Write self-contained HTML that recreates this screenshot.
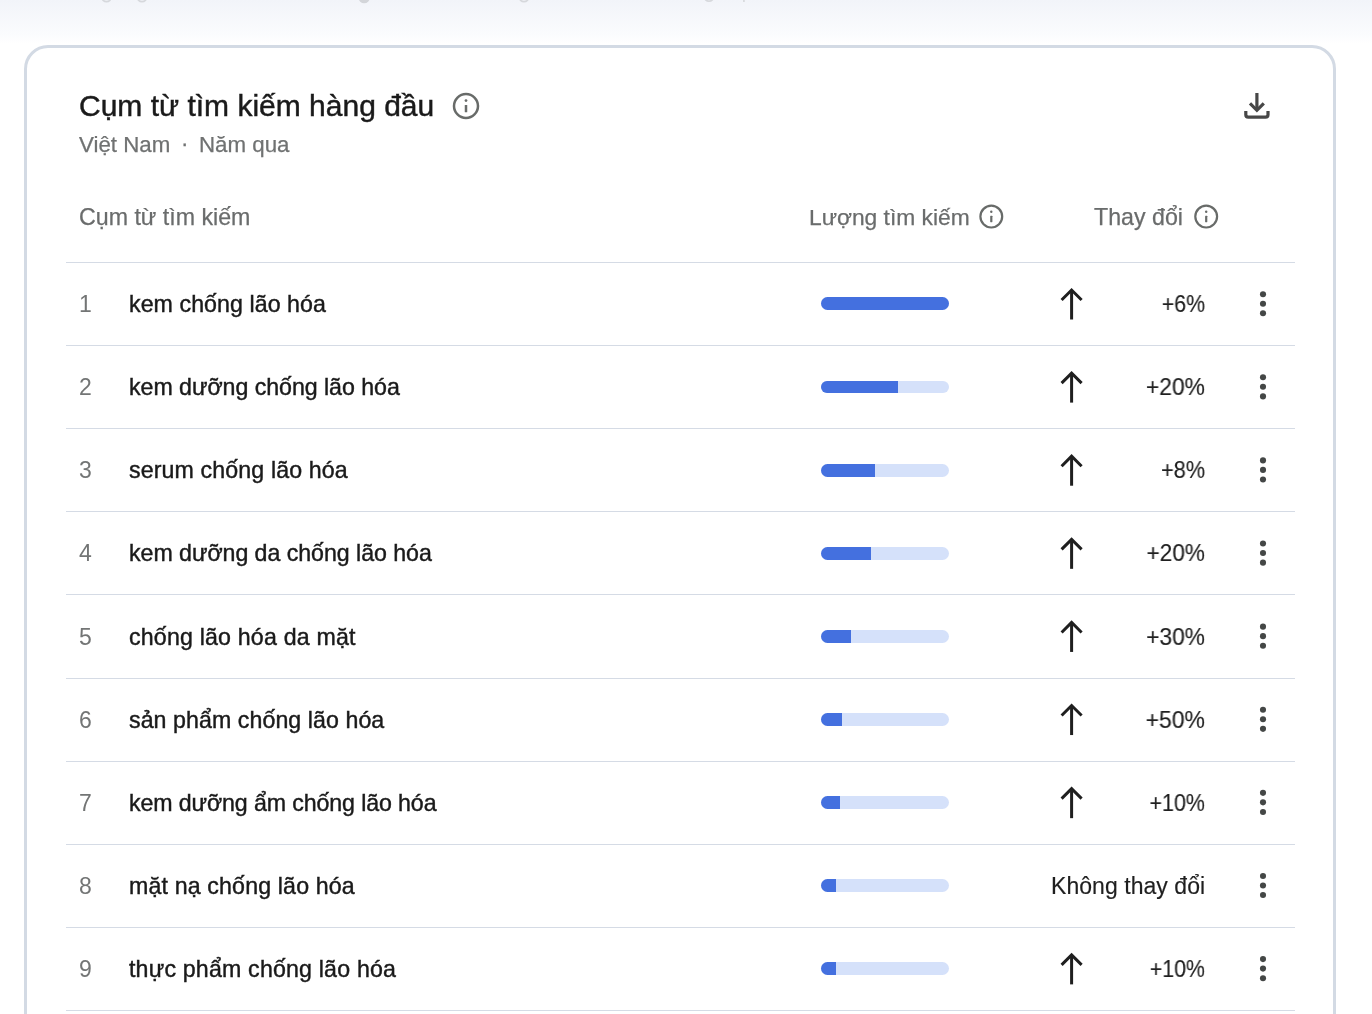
<!DOCTYPE html><html><head><meta charset="utf-8"><style>
*{margin:0;padding:0;box-sizing:border-box}
html,body{width:1372px;height:1014px;overflow:hidden;background:#fff;font-family:"Liberation Sans",sans-serif}
.bg{position:absolute;left:0;top:0;width:1372px;height:46px;background:linear-gradient(#f2f4f9 0,#fbfcfe 36px,#fff 44px)}
.card{position:absolute;left:24px;top:45px;width:1312px;height:1100px;border:3px solid #d3dae4;border-radius:24px;background:#fff}
.t{position:absolute;white-space:nowrap;line-height:1;will-change:transform}
.title{left:79px;font-size:30px;color:#1a1a1a;-webkit-text-stroke:0.45px #1a1a1a}
.sub{font-size:22.3px;color:#707272;-webkit-text-stroke:0.25px #707272}
.hd{font-size:23.2px;color:#6a6c6c;-webkit-text-stroke:0.25px #6a6c6c}
.line{position:absolute;left:66px;width:1229px;height:1px;background:#d5dbe5}
.num{left:79px;font-size:23px;color:#737575}
.q{left:129px;font-size:23.2px;color:#1a1a1a;-webkit-text-stroke:0.42px #1a1a1a}
.pct{right:167px;font-size:23.2px;color:#1f1f1f;text-align:right;-webkit-text-stroke:0.15px #1f1f1f}
.track{position:absolute;left:821px;width:128px;border-radius:7px;background:#d5e1fa;overflow:hidden}
.fill{position:absolute;left:0;top:0;height:100%;background:#4470df}
svg{position:absolute;overflow:visible}
</style></head><body>
<div class="bg"></div>
<div class="card"></div>
<svg style="left:0;top:0" width="1" height="1"><g fill="none" stroke="#d6d8dc" stroke-width="1.8"><circle cx="106.5" cy="-3" r="4.6"/><circle cx="142" cy="-3" r="4.6"/><circle cx="524" cy="-3" r="4.6"/><circle cx="709" cy="-3.5" r="4.6"/></g><ellipse cx="364.2" cy="-3" rx="5.8" ry="6.3" fill="#d3d5d9"/><rect x="743" y="-3" width="1.8" height="5" fill="#d9dbde"/></svg>
<div class="t title" style="top:90.80px">Cụm từ tìm kiếm hàng đầu</div>
<svg style="left:0;top:0" width="1" height="1"><circle cx="466" cy="106" r="12" fill="none" stroke="#686b69" stroke-width="2.5"/><circle cx="466" cy="100.60" r="1.38" fill="#686b69"/><rect x="464.75" y="105.04" width="2.5" height="7.20" rx="0.50" fill="#686b69"/></svg>
<svg style="left:0;top:0" width="1" height="1"><g fill="none" stroke="#474747" stroke-width="3.2"><path d="M1256.9 93 V109"/><path d="M1250 103.4 L1256.9 110.3 L1263.8 103.4"/><path d="M1245.8 110.9 V114.8 Q1245.8 117.2 1248.3 117.2 H1265.5 Q1268 117.2 1268 114.8 V110.9"/></g></svg>
<div class="t sub" style="left:79px;top:133.65px">Việt Nam</div>
<div class="t sub" style="left:181px;top:133.15px">·</div>
<div class="t sub" style="left:199px;top:133.65px">Năm qua</div>
<div class="t hd" style="left:79px;top:205.90px">Cụm từ tìm kiếm</div>
<div class="t hd" style="left:809px;top:205.90px;font-size:22.8px">Lượng tìm kiếm</div>
<svg style="left:0;top:0" width="1" height="1"><circle cx="991.3" cy="216.6" r="10.9" fill="none" stroke="#686b69" stroke-width="2.2"/><circle cx="991.3" cy="211.69" r="1.21" fill="#686b69"/><rect x="990.20" y="215.73" width="2.2" height="6.54" rx="0.44" fill="#686b69"/></svg>
<div class="t hd" style="left:1094px;top:205.90px">Thay đổi</div>
<svg style="left:0;top:0" width="1" height="1"><circle cx="1206.2" cy="216.6" r="10.9" fill="none" stroke="#686b69" stroke-width="2.2"/><circle cx="1206.2" cy="211.69" r="1.21" fill="#686b69"/><rect x="1205.10" y="215.73" width="2.2" height="6.54" rx="0.44" fill="#686b69"/></svg>
<div class="line" style="top:262.00px"></div>
<div class="t num" style="top:292.80px">1</div>
<div class="t q" style="top:292.70px;letter-spacing:0.062px">kem chống lão hóa</div>
<div class="track" style="top:297px;height:13px"><div class="fill" style="width:128px"></div></div>
<svg style="left:0;top:0" width="1" height="1"><g fill="none" stroke="#1f1f1f" stroke-width="3"><path d="M1071.6 291.00 V319.50"/><path d="M1061.6 300.00 L1071.6 290.00 L1081.6 300.00"/></g></svg>
<div class="t pct" style="top:292.70px;transform:scaleX(0.92);transform-origin:100% 50%">+6%</div>
<svg style="left:0;top:0" width="1" height="1"><g fill="#444746"><circle cx="1263" cy="294.20" r="3.05"/><circle cx="1263" cy="303.70" r="3.05"/><circle cx="1263" cy="313.30" r="3.05"/></g></svg>
<div class="line" style="top:345.11px"></div>
<div class="t num" style="top:375.80px">2</div>
<div class="t q" style="top:375.70px;letter-spacing:-0.045px">kem dưỡng chống lão hóa</div>
<div class="track" style="top:381px;height:12px"><div class="fill" style="width:77px"></div></div>
<svg style="left:0;top:0" width="1" height="1"><g fill="none" stroke="#1f1f1f" stroke-width="3"><path d="M1071.6 374.11 V402.61"/><path d="M1061.6 383.11 L1071.6 373.11 L1081.6 383.11"/></g></svg>
<div class="t pct" style="top:375.70px;transform:scaleX(0.985);transform-origin:100% 50%">+20%</div>
<svg style="left:0;top:0" width="1" height="1"><g fill="#444746"><circle cx="1263" cy="377.31" r="3.05"/><circle cx="1263" cy="386.81" r="3.05"/><circle cx="1263" cy="396.41" r="3.05"/></g></svg>
<div class="line" style="top:428.22px"></div>
<div class="t num" style="top:458.80px">3</div>
<div class="t q" style="top:458.70px;letter-spacing:0.122px">serum chống lão hóa</div>
<div class="track" style="top:464px;height:13px"><div class="fill" style="width:54px"></div></div>
<svg style="left:0;top:0" width="1" height="1"><g fill="none" stroke="#1f1f1f" stroke-width="3"><path d="M1071.6 457.22 V485.72"/><path d="M1061.6 466.22 L1071.6 456.22 L1081.6 466.22"/></g></svg>
<div class="t pct" style="top:458.70px;transform:scaleX(0.935);transform-origin:100% 50%">+8%</div>
<svg style="left:0;top:0" width="1" height="1"><g fill="#444746"><circle cx="1263" cy="460.42" r="3.05"/><circle cx="1263" cy="469.92" r="3.05"/><circle cx="1263" cy="479.52" r="3.05"/></g></svg>
<div class="line" style="top:511.33px"></div>
<div class="t num" style="top:541.80px">4</div>
<div class="t q" style="top:541.70px;letter-spacing:-0.048px">kem dưỡng da chống lão hóa</div>
<div class="track" style="top:547px;height:13px"><div class="fill" style="width:50px"></div></div>
<svg style="left:0;top:0" width="1" height="1"><g fill="none" stroke="#1f1f1f" stroke-width="3"><path d="M1071.6 540.33 V568.83"/><path d="M1061.6 549.33 L1071.6 539.33 L1081.6 549.33"/></g></svg>
<div class="t pct" style="top:541.70px;transform:scaleX(0.975);transform-origin:100% 50%">+20%</div>
<svg style="left:0;top:0" width="1" height="1"><g fill="#444746"><circle cx="1263" cy="543.53" r="3.05"/><circle cx="1263" cy="553.03" r="3.05"/><circle cx="1263" cy="562.63" r="3.05"/></g></svg>
<div class="line" style="top:594.44px"></div>
<div class="t num" style="top:625.80px">5</div>
<div class="t q" style="top:625.70px;letter-spacing:0.179px">chống lão hóa da mặt</div>
<div class="track" style="top:630px;height:13px"><div class="fill" style="width:30px"></div></div>
<svg style="left:0;top:0" width="1" height="1"><g fill="none" stroke="#1f1f1f" stroke-width="3"><path d="M1071.6 623.44 V651.94"/><path d="M1061.6 632.44 L1071.6 622.44 L1081.6 632.44"/></g></svg>
<div class="t pct" style="top:625.70px;transform:scaleX(0.98);transform-origin:100% 50%">+30%</div>
<svg style="left:0;top:0" width="1" height="1"><g fill="#444746"><circle cx="1263" cy="626.64" r="3.05"/><circle cx="1263" cy="636.14" r="3.05"/><circle cx="1263" cy="645.74" r="3.05"/></g></svg>
<div class="line" style="top:677.55px"></div>
<div class="t num" style="top:708.80px">6</div>
<div class="t q" style="top:708.70px;letter-spacing:0.062px">sản phẩm chống lão hóa</div>
<div class="track" style="top:713px;height:13px"><div class="fill" style="width:21px"></div></div>
<svg style="left:0;top:0" width="1" height="1"><g fill="none" stroke="#1f1f1f" stroke-width="3"><path d="M1071.6 706.55 V735.05"/><path d="M1061.6 715.55 L1071.6 705.55 L1081.6 715.55"/></g></svg>
<div class="t pct" style="top:708.70px;transform:scaleX(0.99);transform-origin:100% 50%">+50%</div>
<svg style="left:0;top:0" width="1" height="1"><g fill="#444746"><circle cx="1263" cy="709.75" r="3.05"/><circle cx="1263" cy="719.25" r="3.05"/><circle cx="1263" cy="728.85" r="3.05"/></g></svg>
<div class="line" style="top:760.66px"></div>
<div class="t num" style="top:791.80px">7</div>
<div class="t q" style="top:791.70px;letter-spacing:-0.116px">kem dưỡng ẩm chống lão hóa</div>
<div class="track" style="top:796px;height:13px"><div class="fill" style="width:19px"></div></div>
<svg style="left:0;top:0" width="1" height="1"><g fill="none" stroke="#1f1f1f" stroke-width="3"><path d="M1071.6 789.66 V818.16"/><path d="M1061.6 798.66 L1071.6 788.66 L1081.6 798.66"/></g></svg>
<div class="t pct" style="top:791.70px;transform:scaleX(0.925);transform-origin:100% 50%">+10%</div>
<svg style="left:0;top:0" width="1" height="1"><g fill="#444746"><circle cx="1263" cy="792.86" r="3.05"/><circle cx="1263" cy="802.36" r="3.05"/><circle cx="1263" cy="811.96" r="3.05"/></g></svg>
<div class="line" style="top:843.77px"></div>
<div class="t num" style="top:874.80px">8</div>
<div class="t q" style="top:874.70px;letter-spacing:0.142px">mặt nạ chống lão hóa</div>
<div class="track" style="top:879px;height:13px"><div class="fill" style="width:15px"></div></div>
<div class="t pct" style="top:874.80px;font-size:23.0px;letter-spacing:0.05px;right:166.95px">Không thay đổi</div>
<svg style="left:0;top:0" width="1" height="1"><g fill="#444746"><circle cx="1263" cy="875.97" r="3.05"/><circle cx="1263" cy="885.47" r="3.05"/><circle cx="1263" cy="895.07" r="3.05"/></g></svg>
<div class="line" style="top:926.88px"></div>
<div class="t num" style="top:957.80px">9</div>
<div class="t q" style="top:957.70px;letter-spacing:0.177px">thực phẩm chống lão hóa</div>
<div class="track" style="top:962px;height:13px"><div class="fill" style="width:15px"></div></div>
<svg style="left:0;top:0" width="1" height="1"><g fill="none" stroke="#1f1f1f" stroke-width="3"><path d="M1071.6 955.88 V984.38"/><path d="M1061.6 964.88 L1071.6 954.88 L1081.6 964.88"/></g></svg>
<div class="t pct" style="top:957.70px;transform:scaleX(0.92);transform-origin:100% 50%">+10%</div>
<svg style="left:0;top:0" width="1" height="1"><g fill="#444746"><circle cx="1263" cy="959.08" r="3.05"/><circle cx="1263" cy="968.58" r="3.05"/><circle cx="1263" cy="978.18" r="3.05"/></g></svg>
<div class="line" style="top:1009.99px"></div>
</body></html>
